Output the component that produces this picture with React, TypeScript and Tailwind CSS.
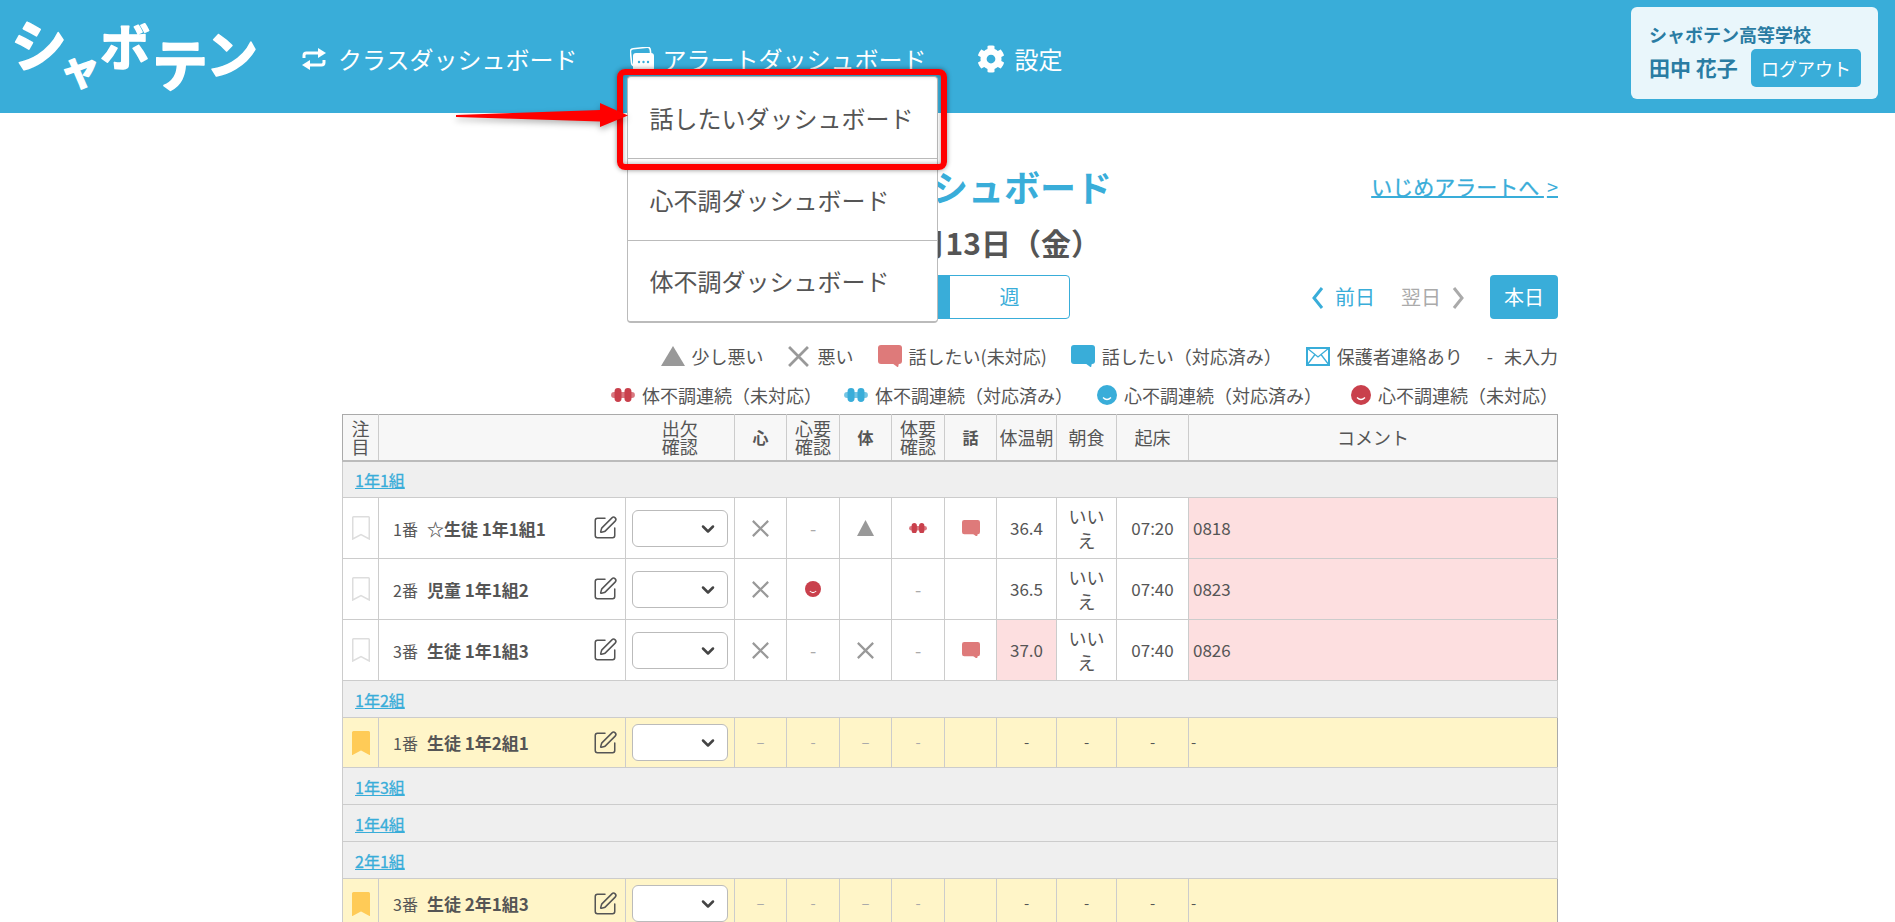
import React from 'react';
import { FaCog } from 'react-icons/fa';
import { ChevronDown, SquarePen } from 'lucide-react';

const cell = 'border border-[#ccc] p-0 text-center align-middle';
const head = 'border border-[#ccc] border-t-[#aaa] border-b-2 border-b-[#bbb] bg-[#f7f7f7] p-0 text-center align-middle leading-[18px]';

const Tri = () => (
  <svg width="24" height="20" viewBox="0 0 24 20" className="shrink-0"><path d="M12 0L24 20H0Z" fill="#999" /></svg>
);
const Cross = ({ size = 21 }: { size?: number }) => (
  <svg width={size} height={size} viewBox="0 0 20 20" className="shrink-0"><path d="M1 1L19 19M19 1L1 19" stroke="#999" strokeWidth="2.6" fill="none" /></svg>
);
const Speech = ({ color, w = 24 }: { color: string; w?: number }) => (
  <svg width={w} height={w * 0.94} viewBox="0 0 24 22.5" className="shrink-0">
    <rect x="0" y="0" width="24" height="19" rx="3" fill={color} />
    <path d="M14 18H21L20 22.5Z" fill={color} />
  </svg>
);
const Dumbbell = ({ color, w = 24 }: { color: string; w?: number }) => (
  <svg width={w} height={w * 0.58} viewBox="0 0 24 14" className="shrink-0">
    <rect x="0" y="4" width="24" height="6" rx="3" fill={color} opacity="0.7" />
    <rect x="3.500" y="0" width="7" height="14" rx="3.500" fill={color} />
    <rect x="13.500" y="0" width="7" height="14" rx="3.500" fill={color} />
  </svg>
);
const Face = ({ color, size = 20 }: { color: string; size?: number }) => (
  <svg width={size} height={size} viewBox="0 0 20 20" className="shrink-0">
    <circle cx="10" cy="10" r="10" fill={color} />
    <path d="M6 12.500Q10 16.500 14 12.500" stroke="#fff" strokeWidth="1.3" fill="none" />
  </svg>
);
const Mail = () => (
  <svg width="24" height="19" viewBox="0 0 24 19" className="shrink-0">
    <rect x="1" y="1" width="22" height="17" fill="#fff" stroke="#39add9" strokeWidth="2" />
    <path d="M1 1L12 10L23 1M1 18L9 7.500M23 18L15 7.500" stroke="#39add9" strokeWidth="1.3" fill="none" />
  </svg>
);
const Bookmark = ({ on }: { on?: boolean }) => (
  <svg width="18" height="24" viewBox="0 0 18 24" className="mx-auto">
    <path d="M1.500 0.750H16.500A0.750 0.750 0 0 1 17.250 1.500V23L9 18.500L0.750 23V1.500A0.750 0.750 0 0 1 1.500 0.750Z" fill={on ? '#ffcb57' : '#fff'} stroke={on ? '#ffcb57' : '#ddd'} strokeWidth="1.5" />
  </svg>
);
const Dash = ({ c = '#aaa' }: { c?: string }) => <span style={{ color: c }}>-</span>;
const Center = ({ children }: { children: React.ReactNode }) => <div className="flex justify-center items-center">{children}</div>;

const NameCell = ({ no, name }: { no: string; name: string }) => (
  <td className={cell}>
    <div className="flex items-center justify-between pl-[14px] pr-[7px]">
      <span className="text-left">
        <span className="text-[16px]">{no}</span>
        <span className="text-[17px] font-bold ml-[9px]">{name}</span>
      </span>
      <SquarePen size={26} strokeWidth={1.4} color="#555" />
    </div>
  </td>
);

const AttendSelect = () => (
  <td className={cell}>
    <div className="relative w-[96px] h-[37px] mx-auto">
      <select className="appearance-none w-full h-full bg-white border border-[#bbb] rounded-[6px]" />
      <ChevronDown size={20} strokeWidth={3} color="#444" className="absolute right-[10px] top-[9px] pointer-events-none" />
    </div>
  </td>
);

const GroupRow = ({ label }: { label: string }) => (
  <tr className="h-[37px] bg-[#efefef]">
    <td colSpan={12} className="border border-[#ccc] p-0 pl-[12px] text-left">
      <a className="text-[16px] text-[#39add9] underline [-webkit-text-stroke:0.3px_#39add9]">{label}</a>
    </td>
  </tr>
);

const Student = ({ no, name, cells, hot, time }: { no: string; name: string; cells: React.ReactNode[]; hot?: boolean; time: string }) => (
  <tr className="h-[61px]">
    <td className={cell}><Bookmark /></td>
    <NameCell no={no} name={name} />
    <AttendSelect />
    {cells.map((c, i) => (
      <td key={i} className={cell}><Center>{c}</Center></td>
    ))}
    <td className={`${cell} text-[17px] ${hot ? 'bg-[#fddfe0]' : ''}`}>{hot ? '37.0' : no === '1番' ? '36.4' : '36.5'}</td>
    <td className={`${cell} text-[18px] leading-[24px] px-[8px]`}>いいえ</td>
    <td className={`${cell} text-[17px]`}>{time}</td>
    <td className={`${cell} border-r-[#aaa] bg-[#fddfe0] text-left pl-[4px] text-[17px]`}>{no === '1番' ? '0818' : no === '2番' ? '0823' : '0826'}</td>
  </tr>
);

const Flagged = ({ no, name }: { no: string; name: string }) => (
  <tr className="h-[50px] bg-[#fff5c8]">
    <td className={cell}><Bookmark on /></td>
    <NameCell no={no} name={name} />
    <AttendSelect />
    {['–', '-', '–', '-'].map((d, i) => (
      <td key={i} className={`${cell} text-[#aaa] text-[15px]`}>{d}</td>
    ))}
    <td className={cell}></td>
    <td className={`${cell} text-[15px]`}>-</td>
    <td className={`${cell} text-[15px]`}>-</td>
    <td className={`${cell} text-[15px]`}>-</td>
    <td className={`${cell} border-r-[#aaa] text-left pl-[2px] text-[15px]`}>-</td>
  </tr>
);

const Legend = ({ icon, text, className = 'gap-[7px]' }: { icon: React.ReactNode; text: string; className?: string }) => (
  <div className={`flex items-center ${className}`}>
    {icon}
    <span>{text}</span>
  </div>
);

export default function App() {
  return (
    <div className="h-screen overflow-hidden bg-white text-[#555] font-['Noto_Sans_CJK_JP','Noto_Sans',sans-serif]">
      {/* Header */}
      <header className="h-[113px] bg-[#39add9] flex items-center relative z-10">
        <svg width="270" height="100" viewBox="0 0 270 100" className="shrink-0 self-start font-bold overflow-visible">
          <g fill="#fff" stroke="#fff" strokeWidth="1.5" strokeLinejoin="round">
            <text x="11" y="66" fontSize="56" transform="rotate(-4 38 42)">シ</text>
            <text x="58" y="85" fontSize="42" transform="rotate(-8 78 62)">ャ</text>
            <text x="100" y="66" fontSize="50">ボ</text>
            <text x="152" y="86" fontSize="56">テ</text>
            <text x="206" y="74" fontSize="52">ン</text>
          </g>
        </svg>
        <nav className="flex items-center ml-[32px] pt-[5px] text-white text-[24px] leading-8">
          <a className="flex items-center gap-[12px]">
            <svg width="24" height="22" viewBox="0 0 24 22">
              <path d="M2 10V7.500Q2 5 4.500 5H17" stroke="#fff" strokeWidth="3" fill="none" />
              <path d="M16 0L24 5L16 10Z" fill="#fff" />
              <path d="M22 12V14.500Q22 17 19.500 17H7" stroke="#fff" strokeWidth="3" fill="none" />
              <path d="M8 12L0 17L8 22Z" fill="#fff" />
            </svg>
            クラスダッシュボード
          </a>
          <a className="flex items-center gap-[9px] ml-[52px] relative">
            <svg width="24" height="24" viewBox="0 0 24 24">
              <rect x="1" y="1" width="20" height="17" rx="3" transform="rotate(-6 11 10)" fill="none" stroke="#fff" strokeWidth="1.6" />
              <rect x="3" y="6" width="21" height="18" rx="3" fill="#fff" />
              <circle cx="9" cy="15" r="1.2" fill="#39add9" />
              <circle cx="13.500" cy="15" r="1.2" fill="#39add9" />
              <circle cx="18" cy="15" r="1.2" fill="#39add9" />
            </svg>
            アラートダッシュボード
            {/* Dropdown */}
            <div className="absolute left-[-3px] top-[33px] w-[311px] h-[247px] bg-white border border-[#bbb] border-b-2 rounded-[4px] text-[#555] flex flex-col">
              <div className="h-[82px] border-b border-[#bbb] flex items-center pl-[22px]">話したいダッシュボード</div>
              <div className="h-[82px] border-b border-[#bbb] flex items-center pl-[22px]">心不調ダッシュボード</div>
              <div className="flex-1 flex items-center pl-[22px]">体不調ダッシュボード</div>
              {/* Red annotation */}
              <div className="absolute left-[-11px] top-[-8px] w-[330px] h-[101px] border-[6px] border-[#f00] rounded-[8px] shadow-[0_0_5px_rgba(0,0,0,0.45),inset_0_0_5px_rgba(0,0,0,0.35)]" />
              <svg width="180" height="34" viewBox="0 0 180 34" className="absolute left-[-172px] top-[22px] drop-shadow-[0_3px_3px_rgba(0,0,0,0.3)]">
                <path d="M0 16L144 11V4L172 16.500L144 28V22.500L0 18Z" fill="#f00" />
              </svg>
            </div>
          </a>
          <a className="flex items-center gap-[10px] ml-[50px]">
            <FaCog size={28} />
            設定
          </a>
        </nav>
        <div className="ml-auto mr-[17px] self-start mt-[7px] w-[247px] h-[92px] bg-[#e9f6fb] rounded-[6px] pl-[18px] pr-[17px] text-[#2a7ca3] font-bold">
          <div className="text-[18px] leading-6 pt-[15px]">シャボテン高等学校</div>
          <div className="flex items-center justify-between mt-[3px]">
            <span className="text-[21px]">田中 花子</span>
            <button className="w-[110px] h-[38px] bg-[#39add9] rounded-[5px] text-white font-normal text-[18px]">ログアウト</button>
          </div>
        </div>
      </header>

      <main className="w-[1216px] ml-[342px]">
        <div className="flex items-center justify-between pt-[49px]">
          <h1 className="ml-[374px] text-[36px] leading-[48px] font-bold text-[#39add9]">話したいダッシュボード</h1>
          <a className="text-[21px] text-[#39add9] underline decoration-2 mt-[2px] [-webkit-text-stroke:0.3px_#39add9]">いじめアラートへ <span className="text-[20px] ml-[3px] [-webkit-text-stroke:0]">&gt;</span></a>
        </div>
        <div className="text-center text-[30px] leading-[40px] font-bold mt-[12px] pr-[2px]">2021年8月13日（金）</div>

        <div className="grid grid-cols-[1fr_auto_1fr] mt-[13px] h-[44px]">
          <div />
          <div className="flex w-[240px] border border-[#39add9] rounded-[4px] text-[20px] leading-[42px] text-center text-[#39add9]">
            <span className="flex-1 bg-[#39add9] text-white">日</span>
            <span className="flex-1">週</span>
          </div>
          <div className="flex items-center justify-end text-[20px]">
            <svg width="13" height="24" viewBox="0 0 13 24" className="mr-[11px] mt-[2px]"><path d="M11 2L3 12L11 22" stroke="#39add9" strokeWidth="3" fill="none" /></svg>
            <span className="text-[#39add9]">前日</span>
            <span className="text-[#aaa] ml-[26px]">翌日</span>
            <svg width="13" height="24" viewBox="0 0 13 24" className="ml-[11px] mr-[25px] mt-[2px]"><path d="M2 2L10 12L2 22" stroke="#aaa" strokeWidth="3" fill="none" /></svg>
            <button className="w-[68px] h-[44px] bg-[#39add9] rounded-[4px] text-white">本日</button>
          </div>
        </div>

        <div className="flex justify-end gap-[24px] mt-[25px] text-[18px] leading-6">
          <Legend icon={<Tri />} text="少し悪い" />
          <Legend icon={<Cross />} text="悪い" className="gap-[9px]" />
          <Legend icon={<Speech color="#de7a7a" />} text="話したい(未対応)" />
          <Legend icon={<Speech color="#39add9" />} text="話したい（対応済み）" />
          <Legend icon={<Mail />} text="保護者連絡あり" />
          <div className="flex gap-[11px]"><span>-</span><span>未入力</span></div>
        </div>
        <div className="flex justify-end gap-[24px] mt-[15px] text-[18px] leading-6">
          <Legend icon={<Dumbbell color="#c9404c" />} text="体不調連続（未対応）" className="gap-[7px] mr-[-2px]" />
          <Legend icon={<Dumbbell color="#39add9" />} text="体不調連続（対応済み）" />
          <Legend icon={<Face color="#39add9" />} text="心不調連続（対応済み）" className="gap-[7px] mr-[5px]" />
          <Legend icon={<Face color="#c9404c" />} text="心不調連続（未対応）" />
        </div>

        <table className="table-fixed border-collapse w-[1216px] mt-[7px] text-[18px]">
          <colgroup>
            <col className="w-[36px]" />
            <col className="w-[247px]" />
            <col className="w-[109px]" />
            <col className="w-[52px]" />
            <col className="w-[53px]" />
            <col className="w-[52px]" />
            <col className="w-[53px]" />
            <col className="w-[52px]" />
            <col className="w-[60px]" />
            <col className="w-[60px]" />
            <col className="w-[72px]" />
            <col />
          </colgroup>
          <thead>
            <tr className="h-[46px]">
              <th className={`${head} font-normal border-l-[#aaa] px-[8px]`}>注目</th>
              <th className={`${head} border-r-0`}></th>
              <th className={`${head} font-normal border-l-0`}>出欠<br />確認</th>
              <th className={`${head} text-[16px]`}>心</th>
              <th className={`${head} font-normal`}>心要<br />確認</th>
              <th className={`${head} text-[16px]`}>体</th>
              <th className={`${head} font-normal`}>体要<br />確認</th>
              <th className={`${head} text-[16px]`}>話</th>
              <th className={`${head} font-normal`}>体温朝</th>
              <th className={`${head} font-normal`}>朝食</th>
              <th className={`${head} font-normal`}>起床</th>
              <th className={`${head} font-normal border-r-[#aaa]`}>コメント</th>
            </tr>
          </thead>
          <tbody>
            <GroupRow label="1年1組" />
            <Student no="1番" name="☆生徒 1年1組1" time="07:20"
              cells={[<Cross size={17} />, <Dash />, <svg width="17" height="16" viewBox="0 0 17 16"><path d="M8.500 0L17 16H0Z" fill="#999" /></svg>, <Dumbbell color="#c9404c" w={18} />, <Speech color="#de7a7a" w={18} />]} />
            <Student no="2番" name="児童 1年1組2" time="07:40"
              cells={[<Cross size={17} />, <Face color="#c9404c" size={16} />, null, <Dash />, null]} />
            <Student no="3番" name="生徒 1年1組3" hot time="07:40"
              cells={[<Cross size={17} />, <Dash />, <Cross size={17} />, <Dash />, <Speech color="#de7a7a" w={18} />]} />
            <GroupRow label="1年2組" />
            <Flagged no="1番" name="生徒 1年2組1" />
            <GroupRow label="1年3組" />
            <GroupRow label="1年4組" />
            <GroupRow label="2年1組" />
            <Flagged no="3番" name="生徒 2年1組3" />
          </tbody>
        </table>
      </main>
    </div>
  );
}
